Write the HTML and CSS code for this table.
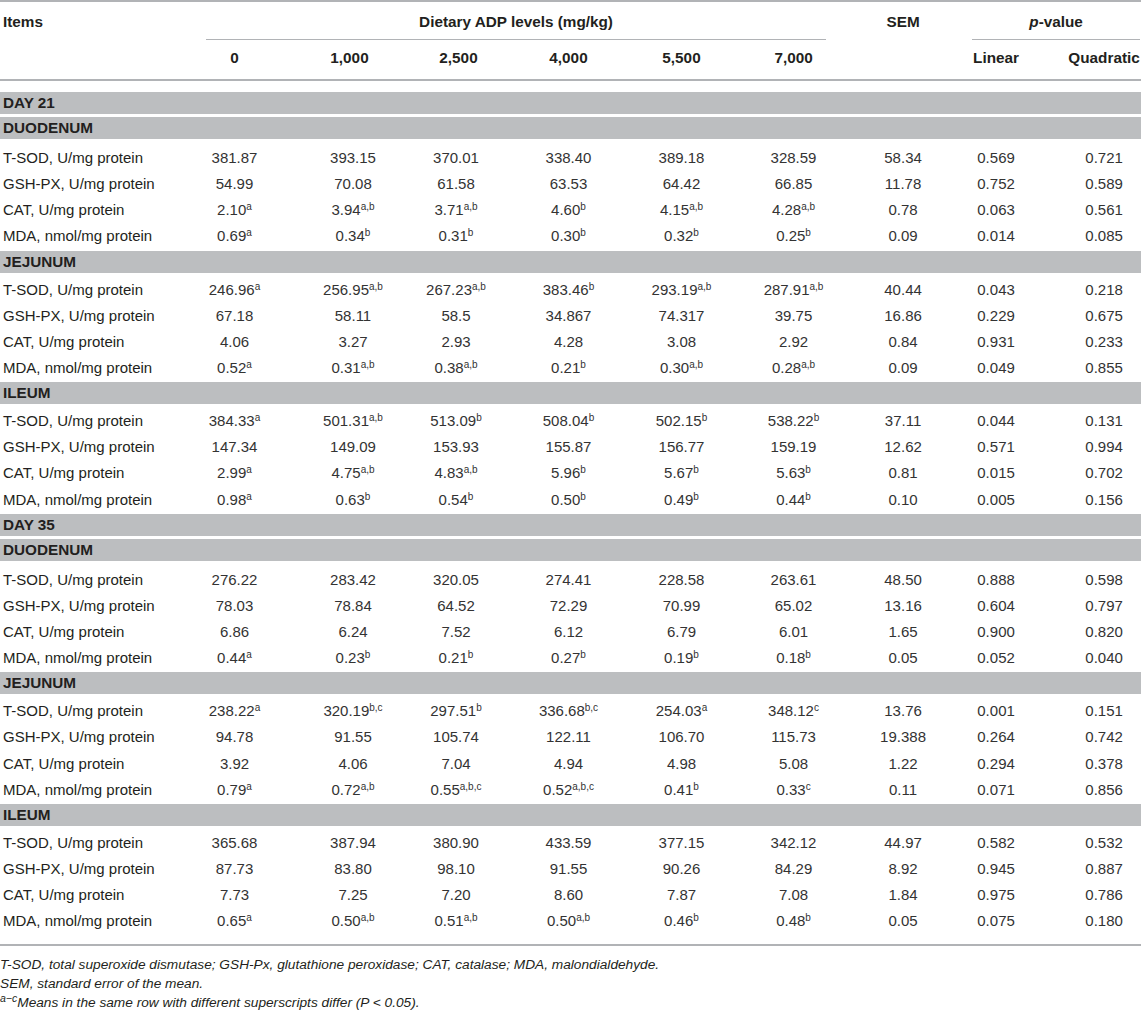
FILE: index.html
```html
<!DOCTYPE html>
<html>
<head>
<meta charset="utf-8">
<link rel="stylesheet" href="styles.css">
</head>
<body>
<div class="wrap">
<table class="tbl">
<colgroup>
<col class="w-items"><col class="w-c1"><col class="w-c2"><col class="w-c3"><col class="w-c4"><col class="w-c5"><col class="w-c6"><col class="w-sem"><col class="w-lin"><col class="w-quad">
</colgroup>
<thead>
<tr class="h1">
<th class="items">Items</th>
<th colspan="6" class="grp"><div class="grp-d">Dietary ADP levels (mg/kg)</div></th>
<th class="sem">SEM</th>
<th colspan="2" class="grp"><div class="grp-p"><i>p</i>-value</div></th>
</tr>
<tr class="h2">
<th></th>
<th>0</th><th class="c2">1,000</th><th class="c3">2,500</th><th>4,000</th><th>5,500</th><th>7,000</th>
<th class="sem"></th><th class="lin">Linear</th><th class="quad">Quadratic</th>
</tr>
</thead>
<tbody>
<tr class="sec day first"><td colspan="10">DAY 21</td></tr>
<tr class="sec after-day"><td colspan="10">DUODENUM</td></tr>
<tr><td class="lbl">T-SOD, U/mg protein</td><td>381.87</td><td class="c2">393.15</td><td class="c3">370.01</td><td>338.40</td><td>389.18</td><td>328.59</td><td class="sem">58.34</td><td class="lin">0.569</td><td class="quad">0.721</td></tr>
<tr><td class="lbl">GSH-PX, U/mg protein</td><td>54.99</td><td class="c2">70.08</td><td class="c3">61.58</td><td>63.53</td><td>64.42</td><td>66.85</td><td class="sem">11.78</td><td class="lin">0.752</td><td class="quad">0.589</td></tr>
<tr><td class="lbl">CAT, U/mg protein</td><td>2.10<sup>a</sup></td><td class="c2">3.94<sup>a,b</sup></td><td class="c3">3.71<sup>a,b</sup></td><td>4.60<sup>b</sup></td><td>4.15<sup>a,b</sup></td><td>4.28<sup>a,b</sup></td><td class="sem">0.78</td><td class="lin">0.063</td><td class="quad">0.561</td></tr>
<tr><td class="lbl">MDA, nmol/mg protein</td><td>0.69<sup>a</sup></td><td class="c2">0.34<sup>b</sup></td><td class="c3">0.31<sup>b</sup></td><td>0.30<sup>b</sup></td><td>0.32<sup>b</sup></td><td>0.25<sup>b</sup></td><td class="sem">0.09</td><td class="lin">0.014</td><td class="quad">0.085</td></tr>
<tr class="sec"><td colspan="10">JEJUNUM</td></tr>
<tr><td class="lbl">T-SOD, U/mg protein</td><td>246.96<sup>a</sup></td><td class="c2">256.95<sup>a,b</sup></td><td class="c3">267.23<sup>a,b</sup></td><td>383.46<sup>b</sup></td><td>293.19<sup>a,b</sup></td><td>287.91<sup>a,b</sup></td><td class="sem">40.44</td><td class="lin">0.043</td><td class="quad">0.218</td></tr>
<tr><td class="lbl">GSH-PX, U/mg protein</td><td>67.18</td><td class="c2">58.11</td><td class="c3">58.5</td><td>34.867</td><td>74.317</td><td>39.75</td><td class="sem">16.86</td><td class="lin">0.229</td><td class="quad">0.675</td></tr>
<tr><td class="lbl">CAT, U/mg protein</td><td>4.06</td><td class="c2">3.27</td><td class="c3">2.93</td><td>4.28</td><td>3.08</td><td>2.92</td><td class="sem">0.84</td><td class="lin">0.931</td><td class="quad">0.233</td></tr>
<tr><td class="lbl">MDA, nmol/mg protein</td><td>0.52<sup>a</sup></td><td class="c2">0.31<sup>a,b</sup></td><td class="c3">0.38<sup>a,b</sup></td><td>0.21<sup>b</sup></td><td>0.30<sup>a,b</sup></td><td>0.28<sup>a,b</sup></td><td class="sem">0.09</td><td class="lin">0.049</td><td class="quad">0.855</td></tr>
<tr class="sec"><td colspan="10">ILEUM</td></tr>
<tr><td class="lbl">T-SOD, U/mg protein</td><td>384.33<sup>a</sup></td><td class="c2">501.31<sup>a,b</sup></td><td class="c3">513.09<sup>b</sup></td><td>508.04<sup>b</sup></td><td>502.15<sup>b</sup></td><td>538.22<sup>b</sup></td><td class="sem">37.11</td><td class="lin">0.044</td><td class="quad">0.131</td></tr>
<tr><td class="lbl">GSH-PX, U/mg protein</td><td>147.34</td><td class="c2">149.09</td><td class="c3">153.93</td><td>155.87</td><td>156.77</td><td>159.19</td><td class="sem">12.62</td><td class="lin">0.571</td><td class="quad">0.994</td></tr>
<tr><td class="lbl">CAT, U/mg protein</td><td>2.99<sup>a</sup></td><td class="c2">4.75<sup>a,b</sup></td><td class="c3">4.83<sup>a,b</sup></td><td>5.96<sup>b</sup></td><td>5.67<sup>b</sup></td><td>5.63<sup>b</sup></td><td class="sem">0.81</td><td class="lin">0.015</td><td class="quad">0.702</td></tr>
<tr><td class="lbl">MDA, nmol/mg protein</td><td>0.98<sup>a</sup></td><td class="c2">0.63<sup>b</sup></td><td class="c3">0.54<sup>b</sup></td><td>0.50<sup>b</sup></td><td>0.49<sup>b</sup></td><td>0.44<sup>b</sup></td><td class="sem">0.10</td><td class="lin">0.005</td><td class="quad">0.156</td></tr>
<tr class="sec day"><td colspan="10">DAY 35</td></tr>
<tr class="sec after-day"><td colspan="10">DUODENUM</td></tr>
<tr><td class="lbl">T-SOD, U/mg protein</td><td>276.22</td><td class="c2">283.42</td><td class="c3">320.05</td><td>274.41</td><td>228.58</td><td>263.61</td><td class="sem">48.50</td><td class="lin">0.888</td><td class="quad">0.598</td></tr>
<tr><td class="lbl">GSH-PX, U/mg protein</td><td>78.03</td><td class="c2">78.84</td><td class="c3">64.52</td><td>72.29</td><td>70.99</td><td>65.02</td><td class="sem">13.16</td><td class="lin">0.604</td><td class="quad">0.797</td></tr>
<tr><td class="lbl">CAT, U/mg protein</td><td>6.86</td><td class="c2">6.24</td><td class="c3">7.52</td><td>6.12</td><td>6.79</td><td>6.01</td><td class="sem">1.65</td><td class="lin">0.900</td><td class="quad">0.820</td></tr>
<tr><td class="lbl">MDA, nmol/mg protein</td><td>0.44<sup>a</sup></td><td class="c2">0.23<sup>b</sup></td><td class="c3">0.21<sup>b</sup></td><td>0.27<sup>b</sup></td><td>0.19<sup>b</sup></td><td>0.18<sup>b</sup></td><td class="sem">0.05</td><td class="lin">0.052</td><td class="quad">0.040</td></tr>
<tr class="sec"><td colspan="10">JEJUNUM</td></tr>
<tr><td class="lbl">T-SOD, U/mg protein</td><td>238.22<sup>a</sup></td><td class="c2">320.19<sup>b,c</sup></td><td class="c3">297.51<sup>b</sup></td><td>336.68<sup>b,c</sup></td><td>254.03<sup>a</sup></td><td>348.12<sup>c</sup></td><td class="sem">13.76</td><td class="lin">0.001</td><td class="quad">0.151</td></tr>
<tr><td class="lbl">GSH-PX, U/mg protein</td><td>94.78</td><td class="c2">91.55</td><td class="c3">105.74</td><td>122.11</td><td>106.70</td><td>115.73</td><td class="sem">19.388</td><td class="lin">0.264</td><td class="quad">0.742</td></tr>
<tr><td class="lbl">CAT, U/mg protein</td><td>3.92</td><td class="c2">4.06</td><td class="c3">7.04</td><td>4.94</td><td>4.98</td><td>5.08</td><td class="sem">1.22</td><td class="lin">0.294</td><td class="quad">0.378</td></tr>
<tr><td class="lbl">MDA, nmol/mg protein</td><td>0.79<sup>a</sup></td><td class="c2">0.72<sup>a,b</sup></td><td class="c3">0.55<sup>a,b,c</sup></td><td>0.52<sup>a,b,c</sup></td><td>0.41<sup>b</sup></td><td>0.33<sup>c</sup></td><td class="sem">0.11</td><td class="lin">0.071</td><td class="quad">0.856</td></tr>
<tr class="sec"><td colspan="10">ILEUM</td></tr>
<tr><td class="lbl">T-SOD, U/mg protein</td><td>365.68</td><td class="c2">387.94</td><td class="c3">380.90</td><td>433.59</td><td>377.15</td><td>342.12</td><td class="sem">44.97</td><td class="lin">0.582</td><td class="quad">0.532</td></tr>
<tr><td class="lbl">GSH-PX, U/mg protein</td><td>87.73</td><td class="c2">83.80</td><td class="c3">98.10</td><td>91.55</td><td>90.26</td><td>84.29</td><td class="sem">8.92</td><td class="lin">0.945</td><td class="quad">0.887</td></tr>
<tr><td class="lbl">CAT, U/mg protein</td><td>7.73</td><td class="c2">7.25</td><td class="c3">7.20</td><td>8.60</td><td>7.87</td><td>7.08</td><td class="sem">1.84</td><td class="lin">0.975</td><td class="quad">0.786</td></tr>
<tr class="last"><td class="lbl">MDA, nmol/mg protein</td><td>0.65<sup>a</sup></td><td class="c2">0.50<sup>a,b</sup></td><td class="c3">0.51<sup>a,b</sup></td><td>0.50<sup>a,b</sup></td><td>0.46<sup>b</sup></td><td>0.48<sup>b</sup></td><td class="sem">0.05</td><td class="lin">0.075</td><td class="quad">0.180</td></tr>
</tbody>
</table>
<div class="notes">
<p>T-SOD, total superoxide dismutase; GSH-Px, glutathione peroxidase; CAT, catalase; MDA, malondialdehyde.</p>
<p>SEM, standard error of the mean.</p>
<p><sup>a&minus;c</sup>Means in the same row with different superscripts differ (P &lt; 0.05).</p>
</div>
</div>
</body>
</html>
```

FILE: styles.css
```css
html, body {
  margin: 0;
  padding: 0;
  background: #fff;
}

body {
  font-family: "Liberation Sans", Arial, sans-serif;
  color: #231f20;
}

.wrap {
  width: 1141px;
}

.tbl {
  width: 1141px;
  table-layout: fixed;
  border-collapse: separate;
  border-spacing: 0;
  border-top: 2px solid #b1b3b6;
  font-size: 15px;
}

.w-items { width: 175px; }
.w-c1 { width: 119px; }
.w-c2 { width: 111px; }
.w-c3 { width: 107px; }
.w-c4 { width: 113px; }
.w-c5 { width: 113px; }
.w-c6 { width: 111px; }
.w-sem { width: 101px; }
.w-lin { width: 100px; }
.w-quad { width: 91px; }

th {
  font-weight: bold;
  font-size: 15.3px;
  color: #231f20;
  line-height: 18px;
  text-align: center;
  white-space: nowrap;
}

.h1 th {
  padding: 11px 0 0 0;
  vertical-align: top;
}

.h1 th.items {
  text-align: left;
  padding-left: 3px;
}

.grp-d {
  margin: 0 23px 0 31px;
  padding-bottom: 8px;
  border-bottom: 1px solid #b1b3b6;
}

.grp-p {
  margin: 0 1px 0 22px;
  padding-bottom: 8px;
  border-bottom: 1px solid #b1b3b6;
}

.h2 th {
  padding: 9px 0 12px 0;
  border-bottom: 2px solid #b1b3b6;
}

td {
  height: 26.15px;
  padding: 0;
  line-height: 26px;
  text-align: center;
  white-space: nowrap;
  color: #333;
}

td.lbl {
  text-align: left;
  padding-left: 3px;
  color: #231f20;
}

.c2 { padding-left: 7px; }
.c3 { padding-right: 5px; }
th.sem, td.sem { padding-left: 7px; }
th.lin, td.lin { padding-right: 8px; }
th.quad, td.quad { padding-left: 17px; }

sup {
  font-size: 10px;
  line-height: 0;
  vertical-align: 5px;
}

.sec td {
  height: 22px;
  line-height: 22px;
  padding: 0 0 0 3px;
  text-align: left;
  font-weight: bold;
  font-size: 15.3px;
  color: #231f20;
  background: #bcbec0;
  border-top: 1px solid #fff;
  border-bottom: 4px solid #fff;
}

.sec.day td {
  border-bottom: 3px solid #fff;
}

.sec.first td {
  border-top: 11px solid #fff;
}

.sec.after-day td {
  border-top: 0;
  border-bottom: 6px solid #fff;
}

.last td {
  height: 26px;
  padding-bottom: 10px;
  line-height: 26px;
  vertical-align: top;
  border-bottom: 2px solid #b1b3b6;
}

.notes {
  padding-top: 9px;
  font-size: 13.7px;
  font-style: italic;
  color: #231f20;
}

.notes p {
  margin: 0;
  line-height: 19px;
}

.notes sup {
  font-size: 10.5px;
  vertical-align: 5px;
}
```
